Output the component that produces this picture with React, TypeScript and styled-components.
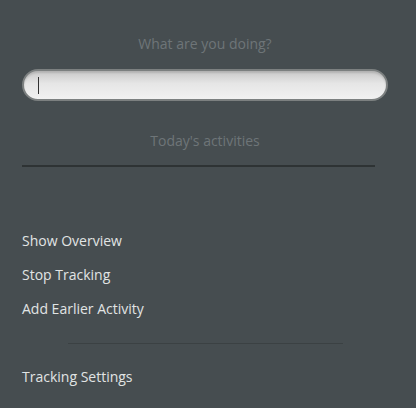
import React from "react";
import styled, { createGlobalStyle } from "styled-components";

const GlobalStyle = createGlobalStyle`
  html, body {
    margin: 0;
    padding: 0;
    background: #464d50;
  }
  body {
    font-family: "Open Sans", "Noto Sans", sans-serif;
  }
`;

const Panel = styled.div`
  width: 416px;
  height: 408px;
  background: #464d50;
  box-sizing: border-box;
  padding: 34px 28px 0 22px;
  display: flex;
  flex-direction: column;
`;

const Caption = styled.div`
  text-align: center;
  color: #6e7578;
  font-size: 14px;
  line-height: 20px;
`;

const EntryWrap = styled.div`
  margin-top: 15px;
  height: 32px;
  box-sizing: border-box;
  border-radius: 16px;
  border: 2px solid #7c8080;
  background: linear-gradient(#c9c9c9, #e6e6e6 45%, #f1f1f1);
  box-shadow: inset 0 2px 2px rgba(0, 0, 0, 0.12);
  display: flex;
  align-items: center;
  padding-left: 14px;
`;

const Cursor = styled.span`
  width: 1px;
  height: 17px;
  background: #333;
`;

const ActivitiesTitle = styled(Caption)`
  margin-top: 30px;
`;

const DarkRule = styled.div`
  margin: 14px 13px 0 0;
  height: 2px;
  background: #2e3334;
`;

const Menu = styled.div`
  margin-top: 57px;
  display: flex;
  flex-direction: column;
`;

const MenuItem = styled.div`
  color: #e1e4e4;
  font-size: 14px;
  line-height: 34px;
  height: 34px;
`;

const Separator = styled.div`
  margin: 17px 45px 16px 46px;
  height: 1px;
  background: #3b4143;
`;

export default function App() {
  return (
    <>
      <GlobalStyle />
      <Panel>
        <Caption>What are you doing?</Caption>
        <EntryWrap>
          <Cursor />
        </EntryWrap>
        <ActivitiesTitle>Today's activities</ActivitiesTitle>
        <DarkRule />
        <Menu>
          <MenuItem>Show Overview</MenuItem>
          <MenuItem>Stop Tracking</MenuItem>
          <MenuItem>Add Earlier Activity</MenuItem>
          <Separator />
          <MenuItem>Tracking Settings</MenuItem>
        </Menu>
      </Panel>
    </>
  );
}
